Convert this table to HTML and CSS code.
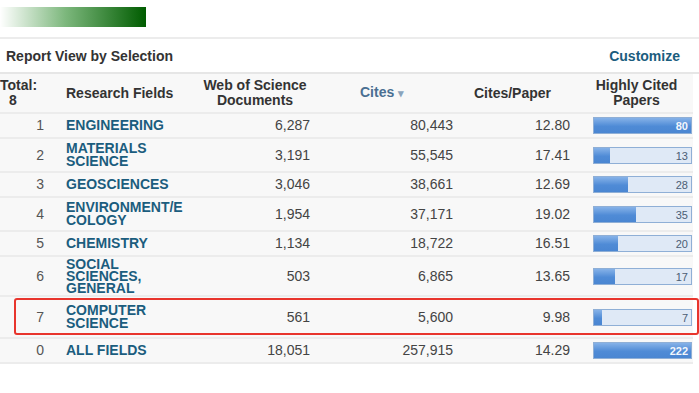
FILE: index.html
```html
<!DOCTYPE html>
<html lang="en">
<head>
    <meta charset="UTF-8">
    <meta name="viewport" content="width=device-width, initial-scale=1.0">
    <title>Report View by Selection</title>
    <link rel="stylesheet" href="styles.css">
</head>
<body>
    <div class="brand-bar"></div>

    <div class="report-head">
        <span class="report-title">Report View by Selection</span>
        <a class="customize" href="#">Customize</a>
    </div>

    <table class="report">
        <colgroup>
            <col class="c-rank">
            <col class="c-field">
            <col class="c-docs">
            <col class="c-cites">
            <col class="c-cpp">
            <col class="c-hot">
        </colgroup>
        <thead>
            <tr>
                <th class="h-rank">Total:<br><span class="total-n">8</span></th>
                <th class="h-field">Research Fields</th>
                <th class="h-docs">Web of Science<br>Documents</th>
                <th class="h-cites">Cites <span class="sort">&#9662;</span></th>
                <th class="h-cpp">Cites/Paper</th>
                <th class="h-hot">Highly Cited<br>Papers</th>
            </tr>
        </thead>
        <tbody>
            <tr>
                <td class="rank">1</td>
                <td class="field"><a href="#">ENGINEERING</a></td>
                <td class="num docs">6,287</td>
                <td class="num cites">80,443</td>
                <td class="num cpp">12.80</td>
                <td class="hot"><div class="bar"><div class="fill" style="width: 100%"></div><span class="val full">80</span></div></td>
            </tr>
            <tr>
                <td class="rank">2</td>
                <td class="field"><a href="#">MATERIALS<br>SCIENCE</a></td>
                <td class="num docs">3,191</td>
                <td class="num cites">55,545</td>
                <td class="num cpp">17.41</td>
                <td class="hot"><div class="bar"><div class="fill" style="width: 16.25%"></div><span class="val">13</span></div></td>
            </tr>
            <tr>
                <td class="rank">3</td>
                <td class="field"><a href="#">GEOSCIENCES</a></td>
                <td class="num docs">3,046</td>
                <td class="num cites">38,661</td>
                <td class="num cpp">12.69</td>
                <td class="hot"><div class="bar"><div class="fill" style="width: 35%"></div><span class="val">28</span></div></td>
            </tr>
            <tr>
                <td class="rank">4</td>
                <td class="field"><a href="#">ENVIRONMENT/E<br>COLOGY</a></td>
                <td class="num docs">1,954</td>
                <td class="num cites">37,171</td>
                <td class="num cpp">19.02</td>
                <td class="hot"><div class="bar"><div class="fill" style="width: 43.75%"></div><span class="val">35</span></div></td>
            </tr>
            <tr>
                <td class="rank">5</td>
                <td class="field"><a href="#">CHEMISTRY</a></td>
                <td class="num docs">1,134</td>
                <td class="num cites">18,722</td>
                <td class="num cpp">16.51</td>
                <td class="hot"><div class="bar"><div class="fill" style="width: 25%"></div><span class="val">20</span></div></td>
            </tr>
            <tr>
                <td class="rank">6</td>
                <td class="field tight"><a href="#">SOCIAL<br>SCIENCES,<br>GENERAL</a></td>
                <td class="num docs">503</td>
                <td class="num cites">6,865</td>
                <td class="num cpp">13.65</td>
                <td class="hot"><div class="bar"><div class="fill" style="width: 21.25%"></div><span class="val">17</span></div></td>
            </tr>
            <tr class="marked">
                <td class="rank"><div class="highlight"></div>7</td>
                <td class="field"><a href="#">COMPUTER<br>SCIENCE</a></td>
                <td class="num docs">561</td>
                <td class="num cites">5,600</td>
                <td class="num cpp">9.98</td>
                <td class="hot"><div class="bar"><div class="fill" style="width: 8.75%"></div><span class="val">7</span></div></td>
            </tr>
            <tr>
                <td class="rank">0</td>
                <td class="field"><a href="#">ALL FIELDS</a></td>
                <td class="num docs">18,051</td>
                <td class="num cites">257,915</td>
                <td class="num cpp">14.29</td>
                <td class="hot"><div class="bar"><div class="fill" style="width: 100%"></div><span class="val full">222</span></div></td>
            </tr>
        </tbody>
    </table>
</body>
</html>
```

FILE: styles.css
```css
html, body {
    overflow: hidden;
}

body {
    font-family: 'Liberation Sans', Arial, sans-serif;
    background-color: #fff;
    color: #444;
    margin: 0;
    padding: 0;
}

.brand-bar {
    width: 146px;
    height: 20px;
    margin-top: 7px;
    background: linear-gradient(to right, #ffffff, #7cb77c 45%, #005c00);
}

.report-head {
    display: flex;
    justify-content: space-between;
    align-items: center;
    height: 33px;
    margin-top: 10px;
    padding: 0 19px 0 6px;
    border-top: 2px solid #ececec;
    border-bottom: 2px solid #e6e6e6;
    font-size: 14px;
    font-weight: bold;
}

.report-title {
    color: #333;
}

.customize {
    color: #1b5d7e;
    text-decoration: none;
}

.report {
    width: 693px;
    table-layout: fixed;
    border-collapse: collapse;
    background-color: #f8f8f8;
    font-size: 14px;
}

.c-rank { width: 52px; }
.c-field { width: 138px; }
.c-docs { width: 130px; }
.c-cites { width: 145px; }
.c-cpp { width: 115px; }
.c-hot { width: 113px; }

.report th {
    height: 38px;
    padding: 0;
    color: #333;
    font-weight: bold;
    line-height: 15px;
    vertical-align: middle;
    border-bottom: 2px solid #ececec;
}

.h-rank { text-align: left; }
.total-n { padding-left: 9px; }
.h-field { text-align: left; padding-left: 14px !important; }
.h-docs { text-align: center; }
.h-cites { text-align: left; padding-left: 40px !important; color: #4a6f92 !important; }
.h-cpp { text-align: left; padding-left: 9px !important; }
.h-hot { text-align: center; }

.sort {
    font-size: 11px;
    color: #8aa4bc;
}

.report td {
    padding: 3px 0;
    line-height: 13px;
    vertical-align: middle;
    border-bottom: 2px solid #ececec;
}

.rank {
    text-align: right;
    padding-right: 8px !important;
    color: #555;
    position: relative;
}

.field {
    padding-left: 14px !important;
    font-weight: bold;
}

.field.tight {
    line-height: 12px !important;
    padding: 1px 0 1px 14px !important;
}

.field a {
    color: #1b5d7e;
    text-decoration: none;
}

.num {
    text-align: right;
    color: #444;
}

.docs { padding-right: 10px !important; }
.cites { padding-right: 12px !important; }
.cpp { padding-right: 10px !important; }

.hot {
    padding-left: 13px !important;
}

.bar {
    position: relative;
    width: 99px;
    height: 17px;
    box-sizing: border-box;
    border: 1px solid #8fafd6;
    background-color: #dfe9f6;
}

.fill {
    height: 100%;
    background: linear-gradient(to bottom, #86b2e8, #4f8bd6 55%, #4a86d2);
}

.val {
    position: absolute;
    right: 3px;
    top: 1px;
    font-size: 11px;
    line-height: 14px;
    color: #4b5d74;
}

.val.full {
    color: #f2f6fc;
    font-weight: bold;
}

.marked td {
    height: 34px;
}

.highlight {
    position: absolute;
    left: 14px;
    top: 1px;
    width: 685px;
    height: 37px;
    box-sizing: border-box;
    border: 2px solid #e8352d;
    border-radius: 3px;
    pointer-events: none;
}
```
